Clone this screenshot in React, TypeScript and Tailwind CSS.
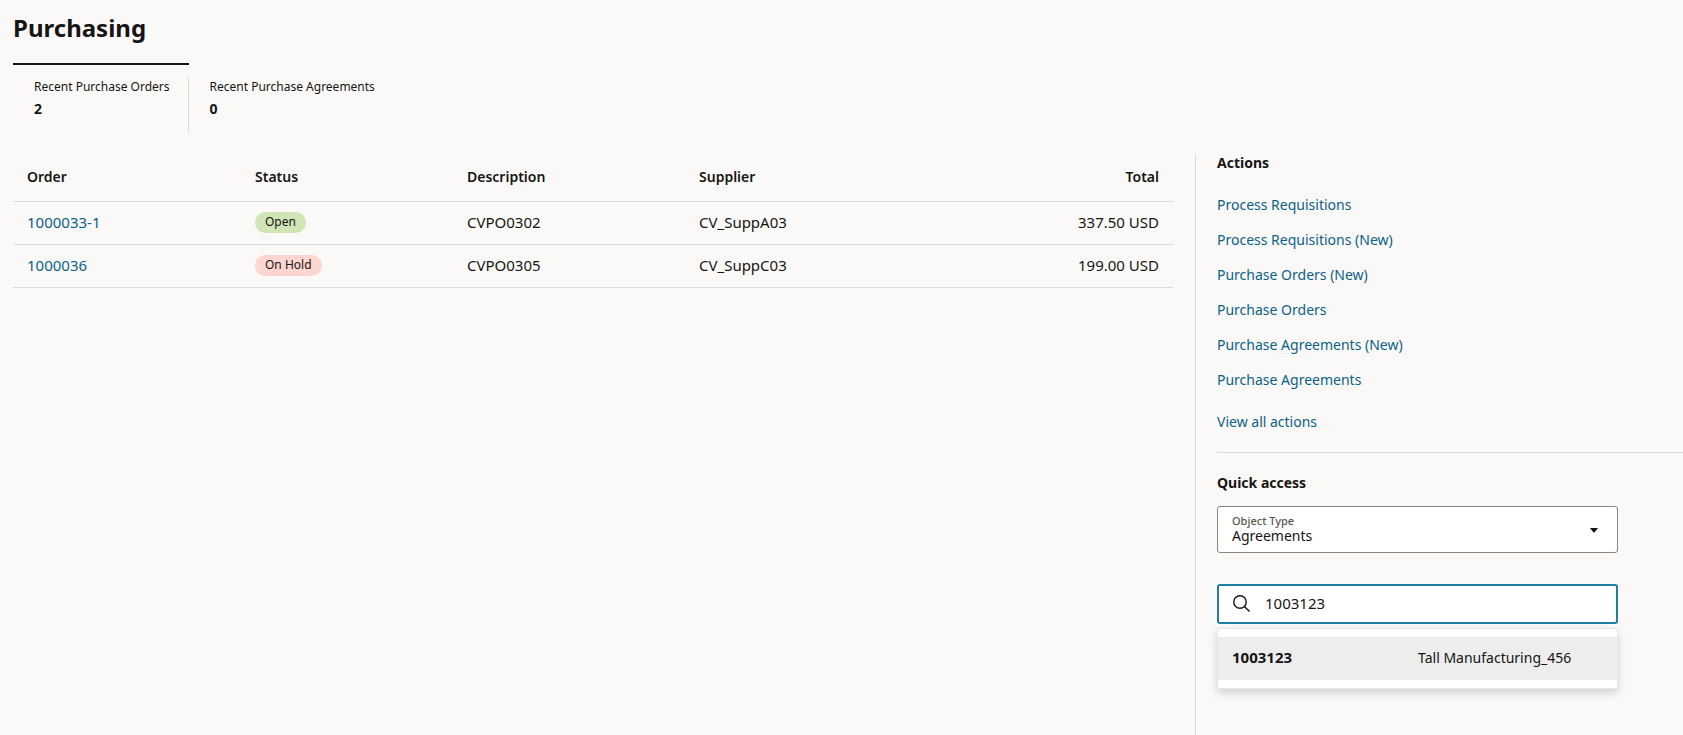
import { useState } from "react";

const orders = [
  { order: "1000033-1", status: "Open", description: "CVPO0302", supplier: "CV_SuppA03", total: "337.50 USD" },
  { order: "1000036", status: "On Hold", description: "CVPO0305", supplier: "CV_SuppC03", total: "199.00 USD" },
];

const actions = [
  "Process Requisitions",
  "Process Requisitions (New)",
  "Purchase Orders (New)",
  "Purchase Orders",
  "Purchase Agreements (New)",
  "Purchase Agreements",
];

function Tab({ label, count, selected }: { label: string; count: number; selected?: boolean }) {
  return (
    <button
      type="button"
      role="tab"
      aria-selected={!!selected}
      className={
        "flex flex-col border-t-2 pt-3 text-left " + (selected ? "border-[#161513]" : "border-transparent")
      }
    >
      <span className={"flex h-14 flex-col pr-[18px] pl-[21px] " + (selected ? "border-r border-[#dddbd9]" : "")}>
        <span className="text-[12px] leading-5">{label}</span>
        <span className="text-[14px] leading-6 font-bold">{count}</span>
      </span>
    </button>
  );
}

function OrdersTable() {
  return (
    <table className="w-full table-fixed border-collapse text-left text-[15px] leading-5">
      <thead>
        <tr className="h-[47px] border-b border-[#dddbd9] text-[14px]">
          <th scope="col" className="w-[228px] px-3.5 font-semibold">Order</th>
          <th scope="col" className="w-[212px] px-3.5 font-semibold">Status</th>
          <th scope="col" className="w-[232px] px-3.5 font-semibold">Description</th>
          <th scope="col" className="px-3.5 font-semibold">Supplier</th>
          <th scope="col" className="px-3.5 text-right font-semibold">Total</th>
        </tr>
      </thead>
      <tbody>
        {orders.map((o) => (
          <tr key={o.order} className="h-[43px] border-b border-[#dddbd9]">
            <td className="px-3.5 pb-0.5">
              <a href="#" className="text-[#0a6186]">{o.order}</a>
            </td>
            <td className="px-3.5 pb-0.5">
              <span
                className={
                  "inline-flex h-[21px] items-center rounded-full px-2.5 align-middle text-[12px] " +
                  (o.status === "Open" ? "bg-[#cfe5b6]" : "bg-[#fdd5d1]")
                }
              >
                {o.status}
              </span>
            </td>
            <td className="px-3.5 pb-0.5">{o.description}</td>
            <td className="px-3.5 pb-0.5">{o.supplier}</td>
            <td className="px-3.5 pb-0.5 text-right">{o.total}</td>
          </tr>
        ))}
      </tbody>
    </table>
  );
}

export default function App() {
  const [query, setQuery] = useState("1003123");

  return (
    <div className="flex min-h-screen flex-col bg-[#fbf9f8] pl-[13px] font-['Noto_Sans',sans-serif] text-[#161513]">
      <h1 className="pt-3 text-[24px] leading-8 font-bold">Purchasing</h1>

      <div role="tablist" className="mt-[19px] flex">
        <Tab label="Recent Purchase Orders" count={2} selected />
        <Tab label="Recent Purchase Agreements" count={0} />
      </div>

      <div className="mt-[21px] flex flex-1">
        <main className="min-w-0 flex-1 pr-[22px]">
          <OrdersTable />
        </main>

        <aside className="w-[488px] shrink-0 border-l border-[#dddbd9] pl-[21px]">
          <section>
            <h2 className="text-[14px] leading-[18px] font-bold">Actions</h2>
            <ul className="mt-[15px] text-[14px]">
              {actions.map((a) => (
                <li key={a} className="flex h-[35px] items-center">
                  <a href="#" className="text-[#0a6186]">{a}</a>
                </li>
              ))}
            </ul>
            <a href="#" className="mt-[13px] inline-block text-[14px] leading-6 text-[#0a6186]">View all actions</a>
          </section>

          <section className="mt-[18px] border-t border-[#dddbd9]">
            <div className="pt-5 pr-[65px]">
              <h2 className="text-[14px] leading-5 font-bold">Quick access</h2>

              <div className="relative mt-[13px]">
                <label htmlFor="object-type" className="absolute top-[7px] left-[15px] text-[11px] leading-4 font-medium text-[#5a5652]">
                  Object Type
                </label>
                <select
                  id="object-type"
                  className="block h-[47px] w-full appearance-none rounded-[3px] border border-[#8b8580] bg-white px-3.5 pt-3 text-[14px]"
                >
                  <option>Agreements</option>
                  <option>Orders</option>
                </select>
                <svg viewBox="0 0 8 5" className="pointer-events-none absolute top-[22px] right-5 h-[5px] w-2" aria-hidden="true">
                  <path d="M0 0h8L4.6 4.2a.9.9 0 0 1-1.2 0z" fill="#161513" />
                </svg>
              </div>

              <div className="relative mt-[31px]">
                <div className="flex h-10 items-center rounded-[3px] border-2 border-[#227e9e] bg-white pb-0.5 pl-3.5">
                  <svg viewBox="0 0 17 17" className="h-[17px] w-[17px] shrink-0" fill="none" stroke="#161513" strokeWidth="1.4" aria-hidden="true">
                    <circle cx="7" cy="7" r="6.2" />
                    <path d="M11.4 11.4l5.1 5.1" />
                  </svg>
                  <input
                    type="text"
                    aria-label="Search agreements"
                    value={query}
                    onChange={(e) => setQuery(e.target.value)}
                    className="ml-[15px] min-w-0 flex-1 bg-transparent text-[15px] outline-none"
                  />
                </div>
                <ul
                  role="listbox"
                  aria-label="Suggestions"
                  className="absolute inset-x-0 top-11 rounded-[3px] border border-[#e9e7e5] bg-white py-2 shadow-[0_4px_8px_rgba(0,0,0,0.16)]"
                >
                  <li role="option" aria-selected="true" className="grid h-[43px] grid-cols-[186px_1fr] items-center bg-[#ededed] px-3.5 pb-0.5">
                    <span className="text-[15px] font-bold">1003123</span>
                    <span className="text-[14px]">Tall Manufacturing_456</span>
                  </li>
                </ul>
              </div>
            </div>
          </section>
        </aside>
      </div>
    </div>
  );
}
